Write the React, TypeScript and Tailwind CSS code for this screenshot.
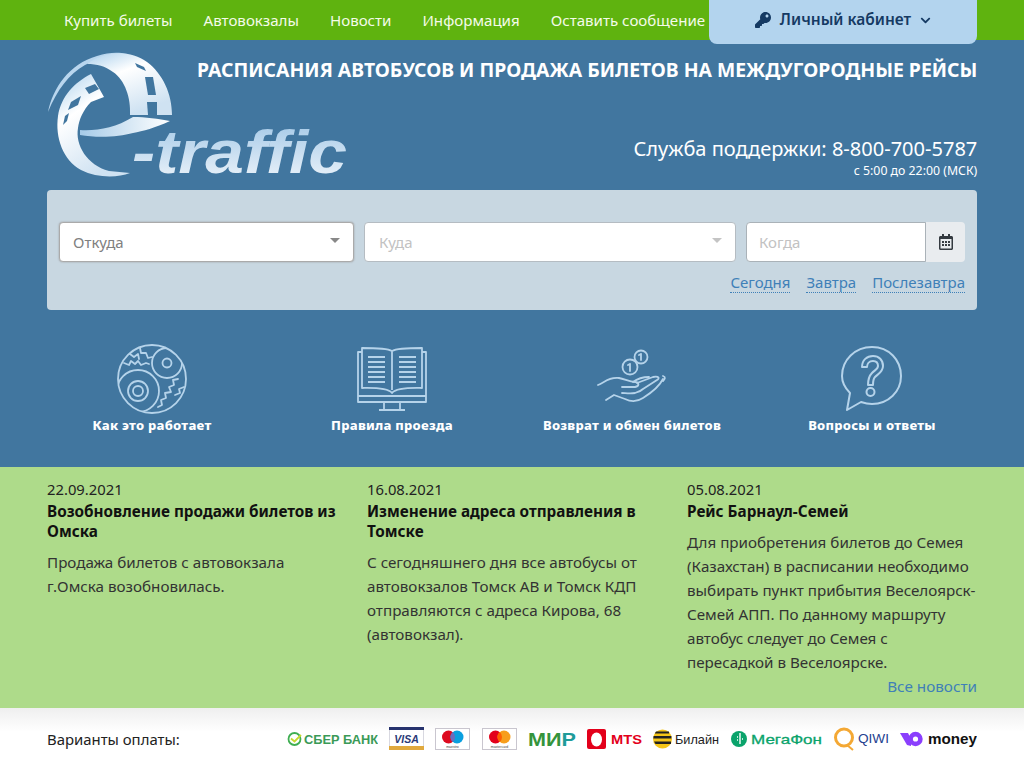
import React from 'react';
import { FaKey, FaChevronDown, FaRegCalendarAlt } from 'react-icons/fa';

const navItems = ['Купить билеты', 'Автовокзалы', 'Новости', 'Информация', 'Оставить сообщение'];

const news = [
  {
    date: '22.09.2021',
    title: 'Возобновление продажи билетов из Омска',
    lines: ['Продажа билетов с автовокзала', 'г.Омска возобновилась.'],
  },
  {
    date: '16.08.2021',
    title: 'Изменение адреса отправления в Томске',
    lines: ['С сегодняшнего дня все автобусы от', 'автовокзалов Томск АВ и Томск КДП', 'отправляются с адреса Кирова, 68', '(автовокзал).'],
  },
  {
    date: '05.08.2021',
    title: 'Рейс Барнаул-Семей',
    lines: [
      'Для приобретения билетов до Семея',
      '(Казахстан) в расписании необходимо',
      'выбирать пункт прибытия Веселоярск-',
      'Семей АПП. По данному маршруту',
      'автобус следует до Семея с',
      'пересадкой в Веселоярске.',
    ],
  },
];

// Logo, coordinates are page pixels minus (47, 50)
function Logo() {
  return (
    <svg width="300" height="130" viewBox="0 0 300 130" className="mt-[10px] -mr-[150px] shrink-0 overflow-visible">
      <defs>
        <linearGradient id="logoFill" x1="0" y1="0" x2="0.5" y2="1">
          <stop offset="0" stopColor="#a9cfec" />
          <stop offset="0.4" stopColor="#ffffff" />
          <stop offset="1" stopColor="#cfe2f2" />
        </linearGradient>
        <linearGradient id="swooshFill" x1="0" y1="0" x2="1" y2="0">
          <stop offset="0" stopColor="#a6cbe8" />
          <stop offset="1" stopColor="#ffffff" />
        </linearGradient>
        <linearGradient id="wordFill" x1="0" y1="0" x2="0" y2="1">
          <stop offset="0" stopColor="#9fc6e6" />
          <stop offset="1" stopColor="#f1f6fb" />
        </linearGradient>
      </defs>
      {/* thin outer arc */}
      <path d="M1 62C6 38 22 14 50 6C62 2 72 2 80 4C66 4 50 9 38 15C22 24 10 40 1 62Z" fill="#b9d6ee" />
      {/* upper road */}
      <path d="M40 14C58 0 84 0 100 12C116 24 125 44 125 65L83 65C84 48 78 30 66 22C58 16 50 14 40 14Z" fill="url(#logoFill)" />
      <path d="M88 13L97 17L99 21L90 17Z" fill="#41769f" />
      <path d="M98 27L106 27L109 45L101 45Z" fill="#41769f" />
      <path d="M100 52L110 52L110 65L101 65Z" fill="#41769f" />
      {/* left road and bottom of the e */}
      <path d="M44 24L57 47L44 52C36 60 32 70 31 78C28 95 40 115 62 121L83 123C70 128 50 128 34 120C16 110 8 88 11 66C14 46 28 32 44 24Z" fill="url(#logoFill)" />
      <path d="M38 38L48 34L52 39L42 44Z" fill="#41769f" />
      <path d="M24 52L34 46L31 55L21 60Z" fill="#41769f" />
      <path d="M18 66L22 63L20 71L16 75Z" fill="#41769f" />
      {/* swoosh */}
      <path d="M33 80C50 81 68 78 86 67C98 67 112 69 123 71C108 78 96 81 86 83C72 87 50 88 33 85Z" fill="url(#swooshFill)" />
      <text x="85" y="123" fontFamily="'Liberation Sans', sans-serif" fontStyle="italic" fontWeight="700" fontSize="62" textLength="215" lengthAdjust="spacingAndGlyphs" fill="url(#wordFill)">-traffic</text>
    </svg>
  );
}

function GearsIcon() {
  return (
    <svg width="72" height="72" viewBox="0 0 72 72" fill="none" stroke="#b5d3ea" strokeWidth="1.8" strokeLinecap="round" strokeLinejoin="round">
      <defs>
        <clipPath id="gearClip">
          <circle cx="36" cy="36" r="34" />
        </clipPath>
      </defs>
      <circle cx="36" cy="36" r="34" />
      <g clipPath="url(#gearClip)">
        <circle cx="22" cy="48" r="21" />
        <circle cx="51" cy="20" r="15" />
      </g>
      <circle cx="22" cy="48" r="10" />
      <circle cx="22" cy="48" r="5" />
      <circle cx="51" cy="20" r="4.5" />
      <path d="M8 20l5 2 2-4 4 3 3-3 3 4 5-2 3 1M14 11l4 3 4-3 1 5M24 5l1 5 5 0 2 5 4-1" />
      <path d="M62 36l-5 1 1 5-5 2 2 5-6 1 1 5-5 2 1 5-4 2M68 44l-5 2 1 4-5 2" />
    </svg>
  );
}

function BookIcon() {
  return (
    <svg width="70" height="66" viewBox="0 0 70 66" fill="none" stroke="#b5d3ea" strokeWidth="1.8" strokeLinejoin="round">
      <path d="M35 44V5C30 2 10 2 5 2V42C12 42 30 41 35 47C40 41 58 42 65 42V2C60 2 40 2 35 5" />
      <path d="M5 6H1V56H69V6H65M1 50H69" />
      <path d="M11 11H28M11 16H28M11 21H28M11 26H28M11 31H28M11 36H28M42 11H59M42 16H59M42 21H59M42 26H59M42 31H59M42 36H59" />
      <path d="M27 56V64M43 56V64M22 64H48" />
    </svg>
  );
}

function CoinsIcon() {
  return (
    <svg width="70" height="60" viewBox="0 0 70 60" fill="none" stroke="#b5d3ea" strokeWidth="1.8" strokeLinecap="round" strokeLinejoin="round">
      <circle cx="33" cy="18" r="7.5" />
      <circle cx="44" cy="8" r="6.5" />
      <path d="M33 15v7M31 16l2-1M44 5v6M42 6l2-1" />
      <path d="M1 36C8 33 12 28 22 29C28 30 32 33 38 33C42 33 43 37 38 38L25 38" />
      <path d="M40 34L56 28C62 27 63 29 60 31L46 40C44 42 42 43 38 44C33 45 28 44 25 44" />
      <path d="M36 33C40 30 45 28 52 28M66 32C68 30 69 28 66 27" />
      <path d="M66 30C62 38 54 44 46 49C40 53 34 53 28 50L17 46L9 51" />
    </svg>
  );
}

function QuestionIcon() {
  return (
    <svg width="62" height="68" viewBox="0 0 62 68" fill="none" stroke="#b5d3ea" strokeWidth="2" strokeLinecap="round" strokeLinejoin="round">
      <path d="M31 2C48 2 60 15 60 31C60 47 47 59 31 59C26 59 23 58 20 57L6 65L9 48C4 43 1 37 1 31C1 15 14 2 31 2Z" />
      <path d="M21 22C21 15 26 11 32 11C38 11 42 15 42 21C42 27 37 29 34 32C32 34 32 37 32 40H27C27 35 28 31 31 28C34 25 37 24 37 21C37 18 35 16 32 16C28 16 26 19 26 22Z" />
      <circle cx="29.5" cy="47" r="4" />
    </svg>
  );
}

const linkIcons = [
  { label: 'Как это работает', icon: <GearsIcon /> },
  { label: 'Правила проезда', icon: <BookIcon /> },
  { label: 'Возврат и обмен билетов', icon: <CoinsIcon /> },
  { label: 'Вопросы и ответы', icon: <QuestionIcon /> },
];

function CardFrame({ children }: { children: React.ReactNode }) {
  return (
    <svg width="35" height="22" viewBox="0 0 35 22" className="shrink-0">
      <rect x="0.5" y="0.5" width="34" height="21" fill="#fff" stroke="#c9c6cf" />
      {children}
    </svg>
  );
}

function PaymentLogos() {
  return (
    <div className="flex items-center justify-between w-[690px]">
      <svg width="91" height="16" viewBox="0 0 91 16" className="shrink-0">
        <circle cx="7.5" cy="8" r="6" fill="none" stroke="#3fae52" strokeWidth="1.8" />
        <path d="M4 7.5L7.5 10.5L14 4" fill="none" stroke="#c6d92f" strokeWidth="1.8" />
        <text x="17" y="12.5" fontFamily="'Liberation Sans', sans-serif" fontWeight="700" fontSize="12.5" fill="#3b9a57" textLength="74" lengthAdjust="spacingAndGlyphs">СБЕР БАНК</text>
      </svg>
      <svg width="35" height="23" viewBox="0 0 35 23" className="shrink-0">
        <rect x="0.5" y="0.5" width="34" height="22" fill="#fff" stroke="#d8d8e0" />
        <rect x="0" y="0" width="35" height="3" fill="#27336e" />
        <rect x="0" y="19" width="35" height="4" fill="#e0a93e" />
        <text x="17.5" y="15.5" textAnchor="middle" fontFamily="'Liberation Sans', sans-serif" fontStyle="italic" fontWeight="700" fontSize="10.5" fill="#2a3a78">VISA</text>
      </svg>
      <CardFrame>
        <circle cx="13.5" cy="9" r="6.5" fill="#dd0a1f" />
        <circle cx="22" cy="9" r="6.5" fill="#0a9fdf" />
        <path d="M17.7 4a6.5 6.5 0 0 1 0 10a6.5 6.5 0 0 1 0-10Z" fill="#6c6bbd" />
        <text x="17.5" y="20" textAnchor="middle" fontFamily="'Liberation Sans', sans-serif" fontSize="3.5" fill="#444">maestro</text>
      </CardFrame>
      <CardFrame>
        <circle cx="13.5" cy="9" r="6.5" fill="#e3001b" />
        <circle cx="22" cy="9" r="6.5" fill="#f79e1b" />
        <path d="M17.7 4a6.5 6.5 0 0 1 0 10a6.5 6.5 0 0 1 0-10Z" fill="#ff5f00" />
        <text x="17.5" y="20" textAnchor="middle" fontFamily="'Liberation Sans', sans-serif" fontSize="3.5" fill="#444">mastercard</text>
      </CardFrame>
      <svg width="48" height="16" viewBox="0 0 48 16" className="shrink-0 overflow-visible">
        <text x="0" y="14.5" fontFamily="'Liberation Sans', sans-serif" fontWeight="700" fontSize="18" fill="#35943c" textLength="48" lengthAdjust="spacingAndGlyphs">МИ<tspan fill="#1f9c9a">Р</tspan></text>
      </svg>
      <svg width="55" height="22" viewBox="0 0 55 22" className="shrink-0">
        <rect x="0" y="1" width="19" height="20" rx="2" fill="#e3001b" />
        <ellipse cx="9.5" cy="11.5" rx="5.5" ry="7" fill="#fff" />
        <text x="24" y="16" fontFamily="'Liberation Sans', sans-serif" fontWeight="700" fontSize="13" fill="#e3001b" textLength="31" lengthAdjust="spacingAndGlyphs">MTS</text>
      </svg>
      <svg width="66" height="20" viewBox="0 0 66 20" className="shrink-0">
        <circle cx="9.5" cy="10" r="9.5" fill="#f5c518" />
        <path d="M0.6 7H18.4V9.6H0.3ZM1 12.6H18V15H2.5ZM3 2.5H16V4.6H1.8Z" fill="#222" />
        <text x="22" y="15" fontFamily="'Liberation Sans', sans-serif" fontSize="13" fill="#222" textLength="44" lengthAdjust="spacingAndGlyphs">Билайн</text>
      </svg>
      <svg width="91" height="18" viewBox="0 0 91 18" className="shrink-0">
        <circle cx="8" cy="9" r="8" fill="#0aa36b" />
        <path d="M9 3V14M6 7H7M6 10H7M11 9H12" stroke="#fff" strokeWidth="1.4" fill="none" />
        <text x="20" y="14" fontFamily="'Liberation Sans', sans-serif" fontSize="13.5" fill="#0aa36b" stroke="#0aa36b" strokeWidth="0.3" textLength="71" lengthAdjust="spacingAndGlyphs">МегаФон</text>
      </svg>
      <svg width="56" height="24" viewBox="0 0 56 24" className="shrink-0">
        <circle cx="11" cy="10.5" r="8.5" fill="none" stroke="#f4a834" strokeWidth="3" />
        <path d="M14 18L20 23" stroke="#f4a834" strokeWidth="2" fill="none" />
        <text x="25" y="16" fontFamily="'Liberation Sans', sans-serif" fontSize="13.5" fill="#24418f" textLength="31" lengthAdjust="spacingAndGlyphs">QIWI</text>
      </svg>
      <svg width="77" height="16" viewBox="0 0 77 16" className="shrink-0">
        <path d="M0 2H8L11 8V15L7 14Z" fill="#8b3ffd" />
        <circle cx="15.5" cy="8" r="7.2" fill="#8b3ffd" />
        <circle cx="15.5" cy="8" r="2.6" fill="#fff" />
        <text x="28" y="13" fontFamily="'Liberation Sans', sans-serif" fontWeight="700" fontSize="14.5" fill="#111" textLength="49" lengthAdjust="spacingAndGlyphs">money</text>
      </svg>
    </div>
  );
}

export default function App() {
  return (
    <div className="min-h-[768px] font-['Noto_Sans',sans-serif] bg-white overflow-hidden">
      {/* Top menu */}
      <div className="bg-[#5fb30f] h-10">
        <div className="w-[930px] mx-auto flex items-start justify-between">
          <nav className="flex gap-[31px] pl-[17px] pt-[10px]">
            {navItems.map((item) => (
              <a key={item} className="text-[15.1px] leading-[21px] text-[#f4fbe9]">{item}</a>
            ))}
          </nav>
          <button className="w-[268px] h-11 bg-[#b3d4ee] rounded-b-lg flex items-center justify-center gap-[9px] pb-[4px] text-[#153a63] text-[15.5px] font-semibold relative">
            <FaKey className="w-4 h-4" />
            <span>Личный кабинет</span>
            <FaChevronDown className="w-[11px] h-[11px]" />
          </button>
        </div>
      </div>

      {/* Blue part */}
      <div className="bg-[#41769f] h-[427px]">
        <div className="w-[930px] mx-auto">
          <header className="flex justify-between h-[150px]">
            <Logo />
            <div className="flex flex-col items-end text-white relative">
              <h1 className="mt-[17px] text-[19.35px] leading-[25px] font-bold whitespace-nowrap">РАСПИСАНИЯ АВТОБУСОВ И ПРОДАЖА БИЛЕТОВ НА МЕЖДУГОРОДНЫЕ РЕЙСЫ</h1>
              <div className="mt-[53px] text-[20.05px] leading-[28px] whitespace-nowrap">Служба поддержки: 8-800-700-5787</div>
              <div className="text-[12.3px] leading-[16px] whitespace-nowrap">с 5:00 до 22:00 (МСК)</div>
            </div>
          </header>

          {/* Search */}
          <div className="bg-[#c8d7e1] rounded-[4px] h-[120px] px-3 pt-8">
            <div className="flex gap-[10px]">
              <div className="w-[295px] h-10 bg-white rounded border border-[#aaa] shadow-[0_0_2px_#999] flex items-center justify-between px-[13px]">
                <span className="text-[15px] text-[#808080]">Откуда</span>
                <span className="w-0 h-0 border-x-[5px] border-x-transparent border-t-[5px] border-t-[#888] mb-[3px]" />
              </div>
              <div className="w-[372px] h-10 bg-white rounded border border-[#b5bcc2] flex items-center justify-between pl-[14px] pr-[13px]">
                <span className="text-[15px] text-[#c2c2c2]">Куда</span>
                <span className="w-0 h-0 border-x-[5px] border-x-transparent border-t-[5px] border-t-[#c4c4c4] mb-[3px]" />
              </div>
              <div className="flex">
                <div className="w-[180px] h-10 bg-white rounded-l border border-[#aab2b8] flex items-center pl-3">
                  <span className="text-[15px] text-[#c2c2c2]">Когда</span>
                </div>
                <div className="w-[39px] h-10 bg-[#e9ecef] rounded-r flex items-center justify-center text-[#343a40]">
                  <FaRegCalendarAlt className="w-[14px] h-4" />
                </div>
              </div>
            </div>
            <div className="flex justify-end gap-[16px] mt-[10px]">
              {['Сегодня', 'Завтра', 'Послезавтра'].map((item) => (
                <a key={item} className="text-[15px] leading-[20px] text-[#3f80b8] border-b border-dotted border-[#3f80b8]">{item}</a>
              ))}
            </div>
          </div>

          {/* Info links */}
          <div className="grid grid-cols-4 w-[960px] -ml-[15px] pt-[33px]">
            {linkIcons.map((item) => (
              <a key={item.label} className="flex flex-col items-center">
                <span className="h-[72px] flex items-center justify-center">{item.icon}</span>
                <span className="text-[13px] leading-[20px] font-extrabold tracking-[0.25px] text-white whitespace-nowrap">{item.label}</span>
              </a>
            ))}
          </div>
        </div>
      </div>

      {/* News */}
      <div className="bg-[#aedb8a] h-[241px]">
        <div className="w-[930px] mx-auto pt-[11px]">
          <div className="grid grid-cols-[320px_320px_290px] h-[198px] text-[#222]">
            {news.map((item) => (
              <article key={item.date} className="w-[300px]">
                <div className="text-[14.8px] leading-[22px]">{item.date}</div>
                <h3 className="mt-[1px] text-[15.3px] leading-[20px] font-bold text-[#111]">{item.title}</h3>
                <div className="mt-[8.5px] text-[15.2px] leading-[24px] text-[#333]">
                  {item.lines.map((line) => (
                    <div key={line} className="whitespace-nowrap">{line}</div>
                  ))}
                </div>
              </article>
            ))}
          </div>
          <div className="text-right text-[15.25px] leading-[20px] text-[#3f80b8]">Все новости</div>
        </div>
      </div>

      {/* Payment */}
      <div className="h-[60px] bg-gradient-to-b from-[#efefef] to-white to-[40%]">
        <div className="w-[930px] mx-auto h-full flex items-center justify-between pt-[3px]">
          <span className="text-[14.9px] text-[#222]">Варианты оплаты:</span>
          <div className="-mt-[2px]">
            <PaymentLogos />
          </div>
        </div>
      </div>
    </div>
  );
}
